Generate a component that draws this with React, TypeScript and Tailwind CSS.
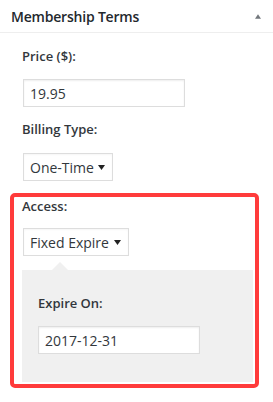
const font = { fontFamily: '"Open Sans", "Noto Sans", sans-serif' };

const Caret = ({ up = false, className = '' }: { up?: boolean; className?: string }) => (
  <svg width="7" height="5" viewBox="0 0 7 5" className={className}>
    <polygon points={up ? '0,5 7,5 3.5,0' : '0,0 7,0 3.5,5'} fill="currentColor" />
  </svg>
);

const Label = ({ children }: { children: React.ReactNode }) => (
  <div className="text-[13px] leading-[18px] font-semibold text-[#32373c]">{children}</div>
);

const Select = ({ value, width }: { value: string; width: string }) => (
  <div
    className={`${width} h-[28px] flex items-center justify-between border border-[#ddd] bg-white pl-[6px] pr-[7px] text-[14px] text-[#32373c] shadow-[inset_0_1px_2px_rgba(0,0,0,0.04)]`}
  >
    <span>{value}</span>
    <Caret className="text-[#222]" />
  </div>
);

const TextInput = ({ value }: { value: string }) => (
  <div className="w-[162px] h-[28px] flex items-center border border-[#ddd] bg-white px-[6px] text-[14px] text-[#32373c] shadow-[inset_0_1px_2px_rgba(0,0,0,0.07)]">
    {value}
  </div>
);

export default function App() {
  return (
    <div className="w-[273px] h-[402px] bg-white overflow-hidden" style={font}>
      {/* Box header */}
      <div className="h-[32px] border-b border-[#eee] flex items-center justify-between pl-[11px] pr-[12px] box-content">
        <span className="text-[14px] font-semibold text-[#23282d] tracking-[-0.2px]">Membership Terms</span>
        <Caret up className="text-[#72777c] w-[6px]" />
      </div>

      <div className="pl-[22px]">
        <div className="pt-[14px]">
          <Label>Price ($):</Label>
        </div>
        <div className="mt-[14px] ml-px">
          <TextInput value="19.95" />
        </div>

        <div className="mt-[13px]">
          <Label>Billing Type:</Label>
        </div>
        <div className="mt-[15px] ml-px">
          <Select value="One-Time" width="w-[90px]" />
        </div>

        {/* Highlighted access section */}
        <div className="mt-[12px] -ml-[12px] w-[249px] border-4 border-[#ff3b3b] rounded-[5px] pl-[8px] pr-[2px] pb-[2px]">
          <Label>Access:</Label>
          <div className="mt-[13px] ml-px">
            <Select value="Fixed Expire" width="w-[106px]" />
          </div>

          <div className="mt-[6px] pl-[30px]">
            <div className="w-0 h-0 border-l-[8px] border-r-[8px] border-b-[8px] border-l-transparent border-r-transparent border-b-[#f0f0f0]" />
          </div>
          <div className="bg-[#f0f0f0] pl-[16px] pt-[24px] pb-[28px]">
            <Label>Expire On:</Label>
            <div className="mt-[14px]">
              <TextInput value="2017-12-31" />
            </div>
          </div>
        </div>
      </div>
    </div>
  );
}
